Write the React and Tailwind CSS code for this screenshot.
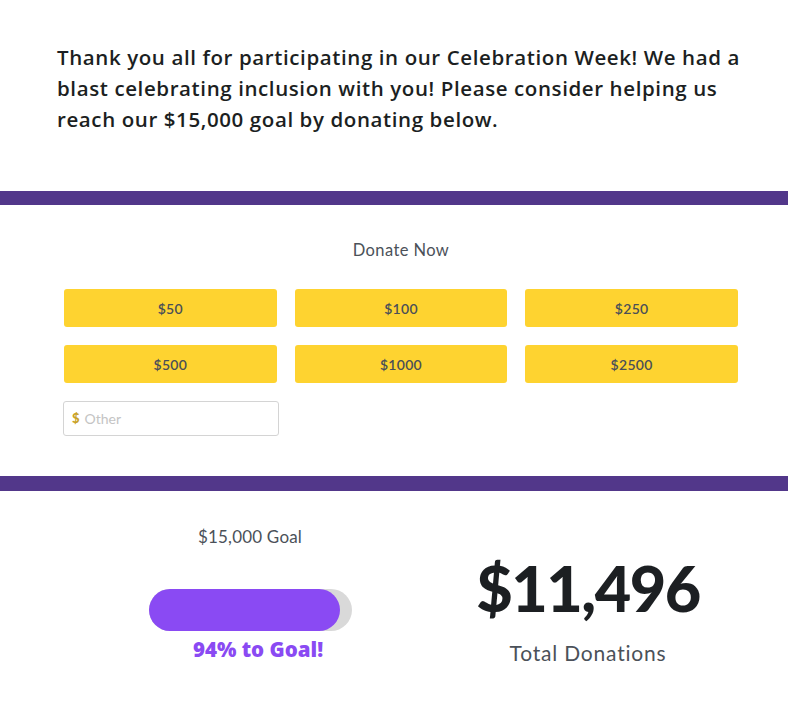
import React from 'react'

const AMOUNTS = ['$50', '$100', '$250', '$500', '$1000', '$2500']

const font = { fontFamily: 'Lato, "Noto Sans", sans-serif' }

export default function App() {
  return (
    <div className="min-h-screen w-full bg-white text-[#1f2226]" style={font}>
      <div className="px-[57px] pt-[42px] pb-[56px]">
        <p
          className="whitespace-nowrap text-[20.5px] font-semibold leading-[31px] tracking-[0.6px] text-[#1c1f22]"
          style={{ fontFamily: '"Open Sans", sans-serif' }}
        >
          Thank you all for participating in our Celebration Week! We had a<br />
          blast celebrating inclusion with you! Please consider helping us<br />
          reach our $15,000 goal by donating below.
        </p>
      </div>

      <div className="h-[14px] bg-[#52378a]" />

      <section className="pl-[64px] pr-[50px] pt-[34px] pb-[40px]">
        <h2 className="text-center text-[16.5px] leading-[22px] tracking-[0.4px] text-[#4b5159]">Donate Now</h2>
        <div className="mt-[28px] grid grid-cols-3 gap-x-[18px] gap-y-[18px]">
          {AMOUNTS.map((a) => (
            <button
              key={a}
              type="button"
              className="h-[38px] rounded-[3px] bg-[#fed330] text-[14px] font-semibold tracking-[0.3px] text-[#4a4f57]"
            >
              {a}
            </button>
          ))}
        </div>
        <div className="mt-[18px] flex h-[35px] w-[216px] -ml-px items-center rounded-[3px] border border-[#d4d4d4] px-[8px]">
          <span className="text-[13px] font-black text-[#c9a227]">$</span>
          <span className="ml-[5px] text-[14px] text-[#c4c4c4]">Other</span>
        </div>
      </section>

      <div className="h-[15px] bg-[#52378a]" />

      <section className="flex pt-[34px]">
        <div className="flex w-[400px] shrink-0 flex-col items-center pl-[100px]">
          <div className="text-[17px] leading-[24px] tracking-[0.2px] text-[#4b5159]">$15,000 Goal</div>
          <div className="relative mt-[40px] h-[42px] w-[203px]">
            <div className="absolute inset-0 rounded-full bg-[#d9d9d9]" />
            <div className="absolute inset-y-0 left-0 w-[191px] rounded-full bg-[#8a4af3]" />
          </div>
          <div
            className="mt-[4px] pl-[16px] text-[20.5px] font-extrabold leading-[28px] text-[#8a4af3]"
            style={{ fontFamily: '"Open Sans", sans-serif' }}
          >
            94% to Goal!
          </div>
        </div>
        <div className="flex w-[376px] shrink-0 flex-col items-center pt-[30px]">
          <div className="text-[63px] font-black leading-[65px] tracking-[-1.5px] text-[#1c1f22]">$11,496</div>
          <div className="mt-[19px] text-[21px] leading-[28px] tracking-[0.8px] text-[#4b5159]">Total Donations</div>
        </div>
      </section>
    </div>
  )
}
